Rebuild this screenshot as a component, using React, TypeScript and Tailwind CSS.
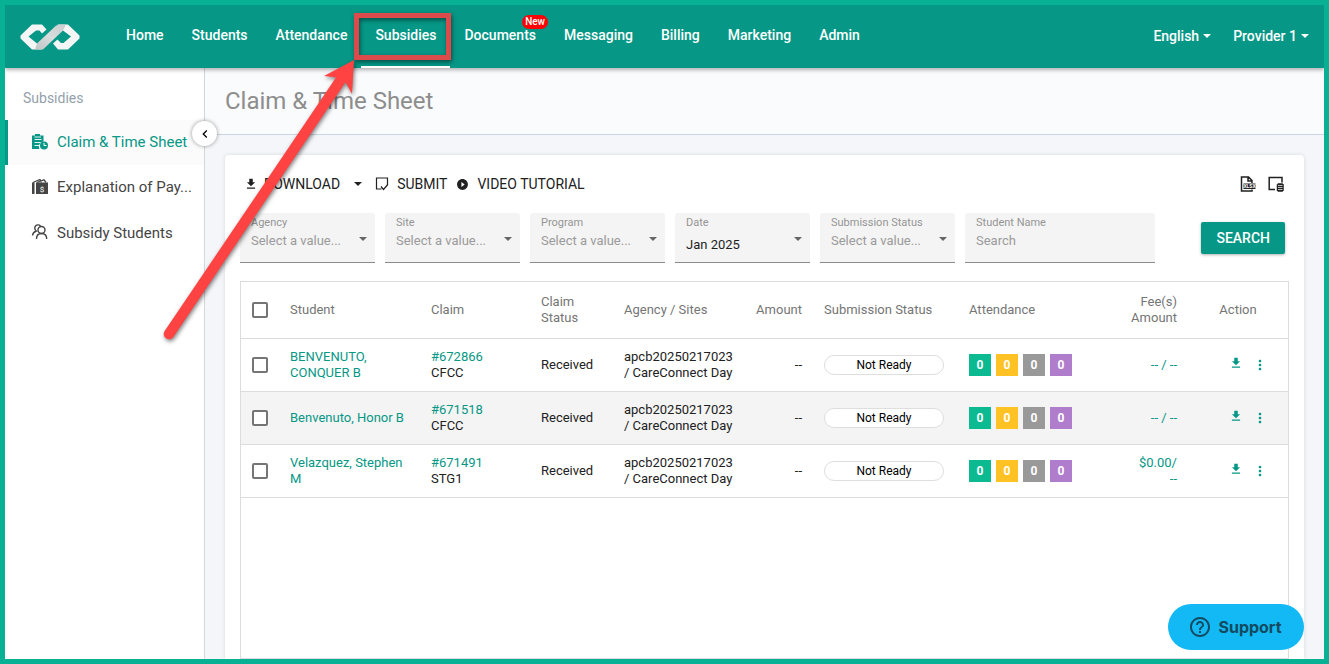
import { clsx } from "clsx"
import { MdChevronLeft, MdFileDownload, MdHelpOutline, MdMoreVert, MdPlayCircleFilled } from "react-icons/md"

const navItems = ["Home", "Students", "Attendance", "Subsidies", "Documents", "Messaging", "Billing", "Marketing", "Admin"]

const filters = [
    { id: "agency", label: "Agency", value: "" },
    { id: "site", label: "Site", value: "" },
    { id: "program", label: "Program", value: "" },
    { id: "date", label: "Date", value: "Jan 2025" },
    { id: "status", label: "Submission Status", value: "" },
]

type Claim = {
    student: string,
    claim: string,
    program: string,
    fee: string[],
}

const claims: Claim[] = [
    { student: "BENVENUTO, CONQUER B", claim: "#672866", program: "CFCC", fee: ["-- / --"] },
    { student: "Benvenuto, Honor B", claim: "#671518", program: "CFCC", fee: ["-- / --"] },
    { student: "Velazquez, Stephen M", claim: "#671491", program: "STG1", fee: ["$0.00/", "--"] },
]

const attendanceColors = ["bg-[#0cba92]", "bg-[#ffc225]", "bg-[#999999]", "bg-[#af7dcb]"]

const Logo = () => (
    <svg width="60" height="26" viewBox="0 0 60 26" aria-hidden="true">
        <defs>
            <linearGradient id="band" x1="0" y1="1" x2="1" y2="0">
                <stop offset="0" stopColor="#bfc4c4" />
                <stop offset="0.500" stopColor="#d9dcdc" />
                <stop offset="1" stopColor="#c9cdcd" />
            </linearGradient>
        </defs>
        <path d="M12 0.500H22L26.500 5.500L22 9.500L19.500 6.500H16L8.500 12.500L17 19.500L22 25.500H12L0.500 14.500V11.500Z" fill="#f4f6f6" />
        <path d="M48 0.500H38L43 6.500L51 12.500L43.500 19H41L37.500 15.500L33 19.500L38 25.500H48L59.500 14.500V11.500Z" fill="#f4f6f6" />
        <path d="M15 25.500 17 19.500 35 2.500 38 0.500H46L43 6.500L23 25.500Z" fill="url(#band)" />
    </svg>
)

const ClaimIcon = () => (
    <svg width="18" height="18" viewBox="0 0 18 18" aria-hidden="true">
        <path d="M1 1.500H4V0H9V1.500H12.500V7.500A5 5 0 0 0 8.500 15H1Z" fill="currentColor" />
        <path d="M3.500 3H10M3.500 5.500H10.500M3.500 8.500H9.500M3.500 11.500H8" stroke="white" strokeWidth="0.900" />
        <circle cx="13" cy="11.500" r="4" fill="currentColor" />
        <path d="M13 9V11.500H15.500" fill="none" stroke="white" />
    </svg>
)

const PaymentIcon = () => (
    <svg width="18" height="18" viewBox="0 0 18 18" aria-hidden="true">
        <path d="M1 3.500H3.500V15H1ZM5 3.500H17V15H5Z" fill="currentColor" />
        <path d="M2 3.500 9 0.500 10.500 3.500M6 3.500 13 0.800 15 3.500" fill="none" stroke="currentColor" strokeWidth="1.300" />
        <text x="11" y="12.500" textAnchor="middle" fontSize="8" fontFamily="Roboto" fill="white">$</text>
    </svg>
)

const StudentsIcon = () => (
    <svg width="18" height="18" viewBox="0 0 18 18" fill="none" stroke="currentColor" strokeWidth="1.400" aria-hidden="true">
        <circle cx="10.500" cy="6" r="3.500" />
        <path d="M5.500 15C5.500 11.500 7.500 9.500 10.500 9.500S15.700 11.500 15.700 15" />
        <path d="M9.500 2A3.300 3.300 0 1 0 5.300 7C3 7.800 1.800 9 1.500 11.500" />
    </svg>
)

const SubmitIcon = () => (
    <svg width="14" height="14" viewBox="0 0 14 14" fill="none" stroke="currentColor" strokeWidth="1.200" aria-hidden="true">
        <path d="M12.500 8V1H1.500V12H6.500" />
        <path d="M6 9.500 8.500 12.500 12.800 7.500" />
    </svg>
)

const XlsxIcon = () => (
    <svg width="16" height="16" viewBox="0 0 16 16" fill="none" stroke="currentColor" strokeWidth="1.500" aria-hidden="true">
        <path d="M12 7V4.500L8.500 1H1.500V15H12V13.500M8 1V5H12" />
        <rect x="3.500" y="7.500" width="12" height="5.500" fill="currentColor" stroke="none" />
        <text x="9.500" y="12" textAnchor="middle" fontSize="5" fontWeight="700" fontFamily="Roboto" fill="white" stroke="none">XLSX</text>
    </svg>
)

const ColumnsIcon = () => (
    <svg width="16" height="16" viewBox="0 0 16 16" fill="none" stroke="currentColor" strokeWidth="1.500" aria-hidden="true">
        <path d="M14 6.500V1.500H1.200V13.500H7" />
        <path d="M9 8.500 10 7.500H14.500L15.500 8.500V14.500L14.500 15.500H10L9 14.500Z" fill="currentColor" strokeWidth="0.500" />
        <path d="M10 9.500H14.500M10 11.500H14.500M10 13.500H14.500" stroke="white" strokeWidth="0.700" />
    </svg>
)

const Caret = ({ className }: { className?: string }) => (
    <svg width="8" height="4" viewBox="0 0 8 4" className={className} aria-hidden="true">
        <path d="M0 0H8L4 4Z" fill="currentColor" />
    </svg>
)

const Header = () => (
    <header className="relative z-10 flex h-[63px] shrink-0 items-stretch bg-[#069786] text-sm font-medium text-white shadow-[0_2px_4px_rgba(0,0,0,0.3)]">
        <a href="#home" aria-label="Home page" className="flex w-[107px] items-center pl-[15px]"><Logo /></a>
        <nav className="flex">
            {navItems.map((item) => (
                <a
                    key={item}
                    href={`#${item.toLowerCase()}`}
                    className={clsx("relative flex items-center border-b-2 px-[14px] pb-[2px]", item === "Subsidies" ? "border-white" : "border-transparent")}
                >
                    {item}
                    {item === "Documents" && (
                        <span className="absolute right-[2px] top-[10px] rounded-full bg-[#fd0303] px-[3px] text-[10px] leading-[14px]">New</span>
                    )}
                </a>
            ))}
        </nav>
        <div className="ml-auto flex items-center gap-[22px] pb-[2px] pr-[15px]">
            <button className="flex items-center gap-1">English <Caret /></button>
            <button className="flex items-center gap-1">Provider 1 <Caret /></button>
        </div>
    </header>
)

const Sidebar = () => (
    <aside className="relative w-[200px] shrink-0 border-r border-[#d5d7da] bg-white">
        <h2 className="px-[18px] pb-[13px] pt-[21px] text-sm leading-[18px] text-[#949fac]">Subsidies</h2>
        <nav className="flex flex-col whitespace-nowrap text-[15px] text-[#454545]">
            <a href="#claims" className="flex h-[45px] items-center gap-2 border-l-3 border-[#069786] bg-[#fbfbfb] pl-[23px] text-[#069786]">
                <ClaimIcon /> Claim &amp; Time Sheet
            </a>
            <a href="#payments" className="flex h-[45px] items-center gap-2 pl-[26px]">
                <PaymentIcon /> Explanation of Pay...
            </a>
            <a href="#students" className="flex h-[46px] items-center gap-2 pl-[26px]">
                <StudentsIcon /> Subsidy Students
            </a>
        </nav>
        <button aria-label="Collapse menu" className="absolute -right-[13px] top-[53px] z-10 flex size-[25px] items-center justify-center rounded-full bg-white text-black shadow-[0_0_4px_rgba(0,0,0,0.4)]">
            <MdChevronLeft size={16} />
        </button>
    </aside>
)

const Toolbar = () => (
    <div className="flex h-7 items-center text-sm text-[#212121]">
        <button className="flex items-center gap-[6px] pl-1">
            <MdFileDownload size={14} /> DOWNLOAD <Caret className="ml-2" />
        </button>
        <button className="ml-[13px] flex items-center gap-2"><SubmitIcon /> SUBMIT</button>
        <button className="ml-[9px] flex items-center gap-2"><MdPlayCircleFilled size={13} /> VIDEO TUTORIAL</button>
        <div className="ml-auto flex gap-3 pr-[5px]">
            <button aria-label="Export to XLSX"><XlsxIcon /></button>
            <button aria-label="Columns"><ColumnsIcon /></button>
        </div>
    </div>
)

const Filters = () => (
    <form className="mt-[15px] flex items-center gap-[10px]">
        {filters.map(({ id, label, value }) => (
            <div key={id} className="relative flex h-[50px] w-[135px] flex-col rounded-t-[3px] border-b border-[#8b8b8b] bg-[#f4f4f4]">
                <label htmlFor={id} className="px-[11px] pt-[2px] text-[11px] leading-4 text-[#949494]">{label}</label>
                <select
                    id={id}
                    className={clsx("w-full appearance-none px-[11px] text-[13px] leading-5 outline-none", value ? "pt-1 text-[#1e1e1e]" : "text-[#9b9b9b]")}
                >
                    <option>{value || "Select a value..."}</option>
                </select>
                <Caret className="pointer-events-none absolute right-2 top-6 text-[#666]" />
            </div>
        ))}
        <div className="flex h-[50px] w-[190px] flex-col rounded-t-[3px] border-b border-[#8b8b8b] bg-[#f4f4f4]">
            <label htmlFor="name" className="px-[11px] pt-[2px] text-[11px] leading-4 text-[#949494]">Student Name</label>
            <input id="name" placeholder="Search" className="w-full px-[11px] text-[13px] leading-5 outline-none placeholder:text-[#9b9b9b]" />
        </div>
        <button type="button" className="ml-auto mr-1 h-8 rounded-[2px] bg-[#069786] px-[15px] text-sm font-medium text-white shadow-[0_1px_3px_rgba(0,0,0,0.3)]">SEARCH</button>
    </form>
)

const Checkbox = ({ label }: { label: string }) => (
    <input type="checkbox" aria-label={label} className="block size-4 appearance-none rounded-[2px] border-2 border-[#757575] bg-white checked:bg-[#069786]" />
)

const ClaimsTable = () => (
    <div className="mt-[18px] flex-1 border border-[#dcdcdc]">
        <table className="w-full table-fixed text-left text-[13px] leading-4 text-[#212121]">
            <colgroup>
                <col className="w-[38px]" />
                <col className="w-[141px]" />
                <col className="w-[110px]" />
                <col className="w-[83px]" />
                <col className="w-[130px]" />
                <col className="w-[70px]" />
                <col className="w-[145px]" />
                <col />
                <col className="w-[80px]" />
                <col className="w-[100px]" />
            </colgroup>
            <thead>
                <tr className="h-14 border-b border-[#dcdcdc] text-[#757575] *:px-[11px] *:font-normal">
                    <th><Checkbox label="Select all claims" /></th>
                    <th>Student</th>
                    <th>Claim</th>
                    <th>Claim Status</th>
                    <th>Agency / Sites</th>
                    <th className="text-right">Amount</th>
                    <th>Submission Status</th>
                    <th>Attendance</th>
                    <th className="text-right">Fee(s) Amount</th>
                    <th className="text-center">Action</th>
                </tr>
            </thead>
            <tbody>
                {claims.map((row) => (
                    <tr key={row.claim} className="h-[53px] border-b border-[#dcdcdc] *:pl-[11px] even:bg-[#f4f4f4]">
                        <td><Checkbox label={`Select ${row.claim}`} /></td>
                        <td className="pr-[11px]"><a href="#student" className="text-[#069786]">{row.student}</a></td>
                        <td>
                            <a href="#claim" className="block text-[#069786]">{row.claim}</a>
                            {row.program}
                        </td>
                        <td>Received</td>
                        <td className="pr-1.5">apcb20250217023 / CareConnect Day</td>
                        <td className="pr-[11px] text-right">--</td>
                        <td>
                            <div className="h-5 w-[120px] rounded-full border border-[#dedede] bg-white text-center text-[12px] leading-[18px] text-black">Not Ready</div>
                        </td>
                        <td>
                            <div className="flex gap-[5px]">
                                {attendanceColors.map((color) => (
                                    <span key={color} className={clsx("size-[22px] text-center text-[12px] font-bold leading-[22px] text-white", color)}>0</span>
                                ))}
                            </div>
                        </td>
                        <td className="pr-[11px] text-right text-[#069786]">
                            {row.fee.map((line) => <span key={line} className="block">{line}</span>)}
                        </td>
                        <td className="pr-5">
                            <div className="flex items-center justify-end gap-[9px] text-[#069786]">
                                <button aria-label="Download" className="pb-1"><MdFileDownload size={14} /></button>
                                <button aria-label="More"><MdMoreVert size={16} /></button>
                            </div>
                        </td>
                    </tr>
                ))}
            </tbody>
        </table>
    </div>
)

// Callout that points at the Subsidies tab
const Callout = () => (
    <svg width="460" height="345" viewBox="0 0 460 345" className="drop-shadow-[1px_2px_2px_rgba(0,0,0,0.5)]" aria-hidden="true">
        <rect x="356.500" y="15.500" width="92" height="42" fill="none" stroke="#dc4b4b" strokeWidth="5" />
        <path d="M169 334 342 78" stroke="#ff4343" strokeWidth="10.500" strokeLinecap="round" />
        <path d="M354 60 324 76 337 77.500 346 83 352 94Z" fill="#ff4343" />
    </svg>
)

const App = () => {
    return (
        <div className="relative flex h-screen flex-col overflow-hidden border-5 border-[#08b094] bg-[#f4f6fa] font-[Roboto,sans-serif]">
            <Header />
            <div className="flex min-h-0 flex-1">
                <Sidebar />
                <main className="flex min-w-0 flex-1 flex-col">
                    <div className="flex h-[67px] shrink-0 items-center border-b border-[#c9d6e2] bg-[#fafbfd] px-5">
                        <h1 className="text-2xl text-[#8d8d8d]">Claim &amp; Time Sheet</h1>
                    </div>
                    <section className="mx-5 mt-5 flex flex-1 flex-col rounded-t-[4px] bg-white px-[15px] pt-[15px] shadow-[0_0_4px_rgba(0,0,0,0.12)]">
                        <Toolbar />
                        <Filters />
                        <ClaimsTable />
                    </section>
                </main>
            </div>
            <button className="absolute bottom-[9px] right-5 z-20 flex h-[46px] w-[136px] items-center justify-center gap-[6px] rounded-full bg-[#12b9f4] pr-[2px] font-[Inter,sans-serif] text-base font-bold text-[#144a60]">
                <MdHelpOutline size={24} /> Support
            </button>
            <div className="pointer-events-none absolute -left-[5px] -top-[5px] z-20"><Callout /></div>
        </div>
    )
}

export default App
